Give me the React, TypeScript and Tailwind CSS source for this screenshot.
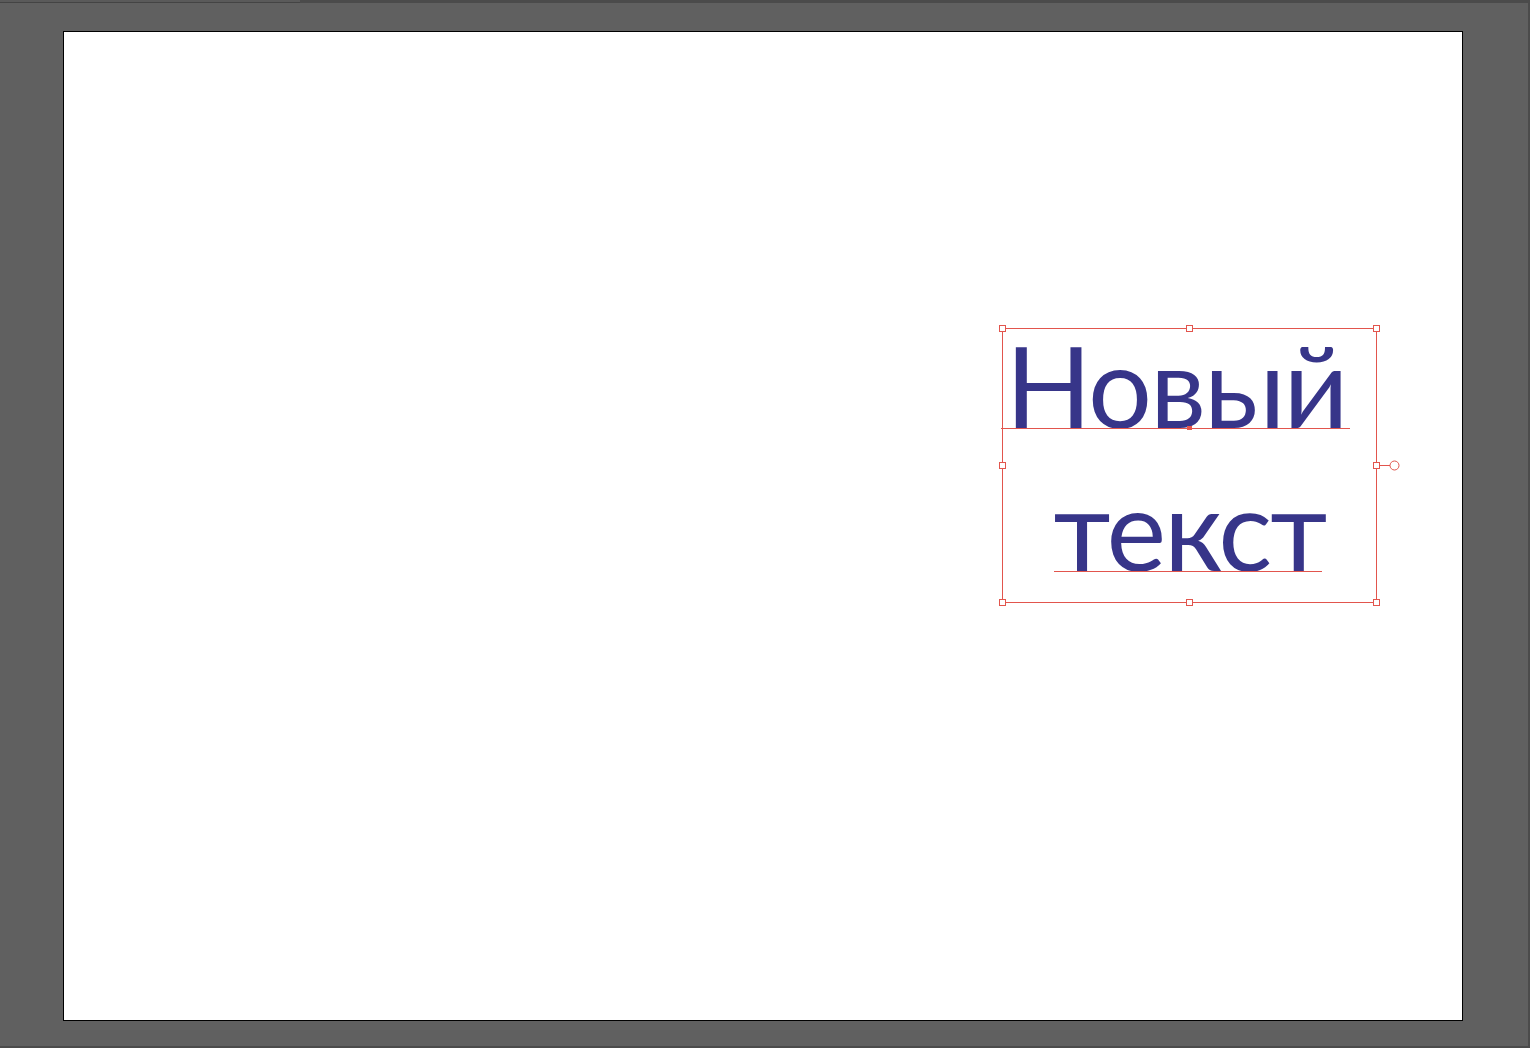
const SEL = "#e2554d";

// Illustrator-style selection overlay: bounding box, handles, baselines
function SelectionOverlay() {
  const handles: [number, number][] = [
    [0.5, 0.5], [187.5, 0.5], [374.5, 0.5],
    [0.5, 137.5], [374.5, 137.5],
    [0.5, 274.5], [187.5, 274.5], [374.5, 274.5],
  ];
  return (
    <svg
      className="pointer-events-none absolute inset-0 overflow-visible"
      width={375}
      height={275}
      viewBox="0 0 375 275"
    >
      <rect x={0.5} y={0.5} width={374} height={274} fill="none" stroke={SEL} strokeWidth={1} />
      <line x1={-1} y1={100.5} x2={348} y2={100.5} stroke={SEL} strokeWidth={1} />
      <rect x={185} y={98} width={5} height={4} fill={SEL} />
      <line x1={52} y1={243.5} x2={320} y2={243.5} stroke={SEL} strokeWidth={1} />
      {handles.map(([x, y], i) => (
        <rect key={i} x={x - 3} y={y - 3} width={6} height={6} fill="white" stroke={SEL} strokeWidth={1} />
      ))}
      <line x1={378} y1={137.5} x2={388} y2={137.5} stroke={SEL} strokeWidth={1} />
      <circle cx={392.5} cy={137.5} r={4.5} fill="white" stroke={SEL} strokeWidth={1} />
    </svg>
  );
}

function TextFrame() {
  return (
    <div className="relative flex h-[275px] w-[375px] flex-col">
      <div className="-mt-[15px] flex flex-col items-center text-[113px] leading-[143px] tracking-[-2px] text-[#373589] [font-family:Lato,sans-serif]">
        <span className="whitespace-pre">{"Новый "}</span>
        <span>текст</span>
      </div>
      <SelectionOverlay />
    </div>
  );
}

export default function App() {
  return (
    <div className="flex h-[1048px] w-[1530px] flex-col overflow-hidden bg-[#4b4b4b]">
      <div className="flex h-[3px]">
        <div className="h-[3px] w-[300px] border-b border-[#444] bg-[#5a5a5a]" />
      </div>
      <div className="flex flex-1">
        <div className="flex h-[1043px] w-[1528px] bg-[#606060] pl-[63px] pt-[28px]">
          <div className="flex h-[990px] w-[1400px] border border-black bg-white pl-[938px] pt-[296px]">
            <TextFrame />
          </div>
        </div>
      </div>
    </div>
  );
}
